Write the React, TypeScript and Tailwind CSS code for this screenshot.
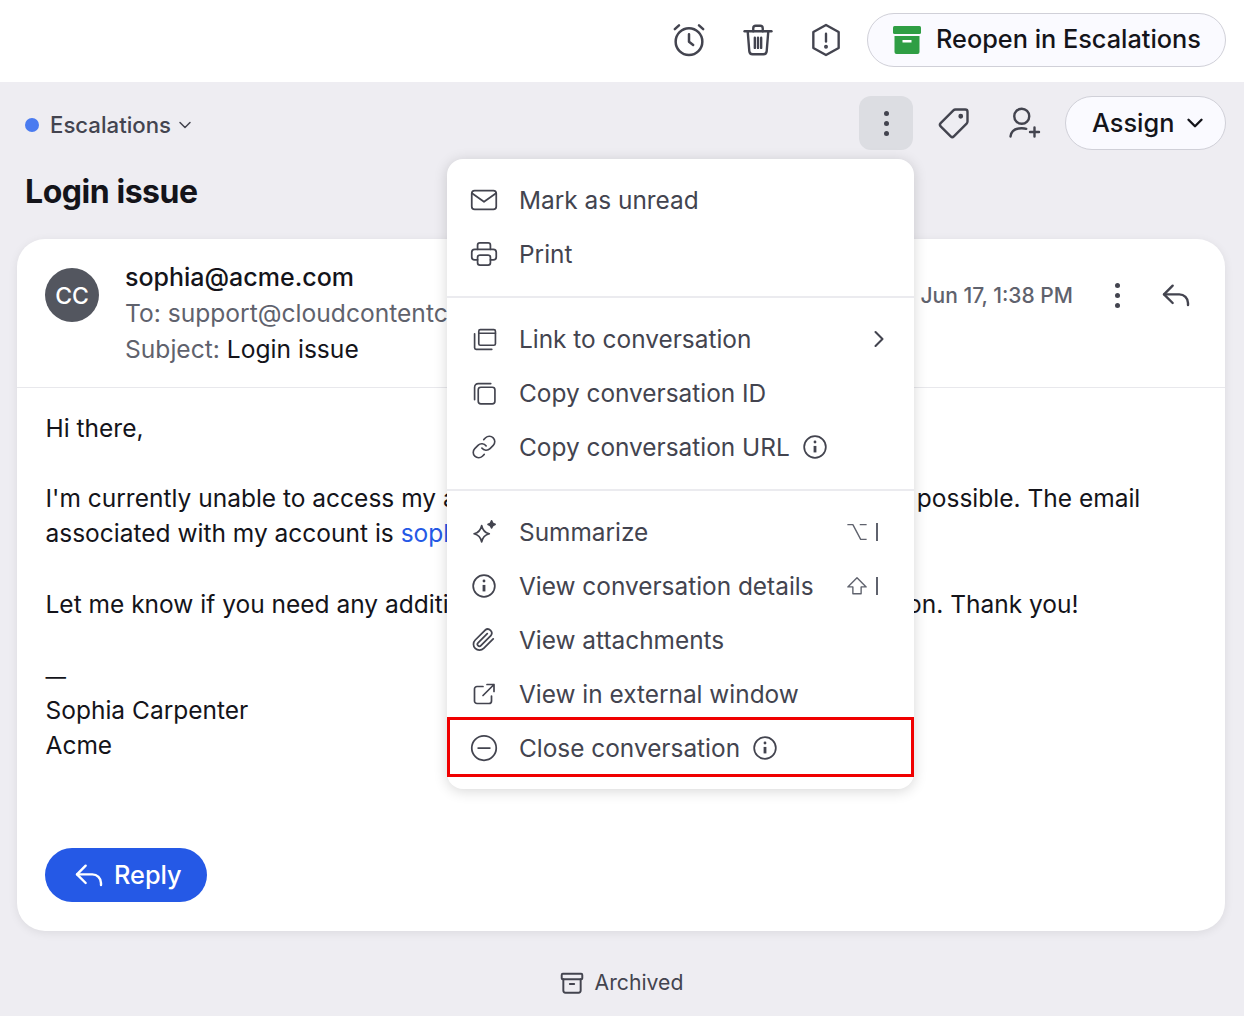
import React from 'react';
import { ChevronDown, ChevronRight } from 'lucide-react';

const Ico = ({ size = 28, sw = 2, className = '', children }: { size?: number; sw?: number; className?: string; children: React.ReactNode }) => (
  <svg width={size} height={size} viewBox="0 0 24 24" fill="none" stroke="currentColor" strokeWidth={sw} strokeLinecap="round" strokeLinejoin="round" className={className}>
    {children}
  </svg>
);

const InfoIcon = ({ size = 26 }: { size?: number }) => (
  <Ico size={size} sw={1.6}>
    <circle cx="12" cy="12" r="10" />
    <path d="M12 11v6" strokeWidth={2.6} strokeLinecap="butt" />
    <circle cx="12" cy="7.4" r="1.3" fill="currentColor" stroke="none" />
  </Ico>
);

const MenuRow = ({ icon, label, right }: { icon: React.ReactNode; label: string; right?: React.ReactNode }) => (
  <div className="flex h-[54px] items-center pl-[22px] pr-[34px] text-[24.4px] text-[#43444f]">
    <span className="flex w-[30px] justify-center">{icon}</span>
    <span className="ml-[20px] flex-1 whitespace-nowrap">{label}</span>
    {right}
  </div>
);

const ReplyArrow = ({ size = 32 }: { size?: number }) => (
  <Ico size={size} sw={1.8}>
    <path d="M9.5 5 3 11.5 9.5 18" />
    <path d="M3 11.5h11.5a6.5 6.5 0 0 1 6.5 6.5v1.5" />
  </Ico>
);

const Dots = ({ className = '' }: { className?: string }) => (
  <span className={`flex flex-col gap-[5px] ${className}`}>
    <span className="h-[5px] w-[5px] rounded-full bg-current" />
    <span className="h-[5px] w-[5px] rounded-full bg-current" />
    <span className="h-[5px] w-[5px] rounded-full bg-current" />
  </span>
);

function Shortcut({ kind }: { kind: 'opt' | 'shift' }) {
  return (
    <span className="mr-[2px] flex items-center gap-[8px] text-[#5f626d]">
      {kind === 'opt' ? (
        <Ico size={22} sw={1.5}>
          <path d="M1.500 4h6l8.500 16h6.500M15 4h7.500" strokeLinecap="butt" />
        </Ico>
      ) : (
        <Ico size={22} sw={1.5}>
          <path d="M12 3 2 13h5.500v7.500h9V13H22z" />
        </Ico>
      )}
      <span className="h-[18px] w-[2px] bg-current" />
    </span>
  );
}

export default function App() {
  return (
    <div className="relative h-[1016px] w-[1244px] overflow-hidden bg-[#eeedf2] font-['Inter',sans-serif] text-[#14141a]">
      <div className="flex h-[82px] items-center justify-end bg-white pb-[2px] pr-[18px] text-[#43444f]">
        <span className="mr-[30px] ml-[4px]">
          <Ico size={40} sw={1.5}>
            <circle cx="12" cy="13" r="8" />
            <path d="M12 8.500V13l2.500 2" />
            <path d="M3.500 5.500 6 3.200M20.500 5.500 18 3.200" />
          </Ico>
        </span>
        <span className="mr-[30px]">
          <Ico size={38} sw={1.5}>
            <path d="M3.500 6.500h17" />
            <path d="M9 6.500V4.600c0-.9.7-1.600 1.600-1.600h2.800c.9 0 1.600.7 1.600 1.600v1.900" />
            <path d="M5.500 6.500 6.500 19c.1 1.200 1 2 2.100 2h6.800c1.100 0 2-.8 2.100-2l1-12.500" />
            <path d="M10 10.500v6.500M12 10.500v6.500M14 10.500v6.500" />
          </Ico>
        </span>
        <span className="mr-[22px]">
          <Ico size={38} sw={1.5}>
            <path d="M12 2.500 20 7v10l-8 4.500L4 17V7z" />
            <path d="M12 8v5" />
            <circle cx="12" cy="16.300" r=".5" fill="currentColor" />
          </Ico>
        </span>
        <button className="flex h-[54px] w-[359px] items-center rounded-full border border-[#d0d0d8] bg-[#fafaff] pl-[24px] text-[25.3px] font-medium text-[#14141a]">
          <svg width="30" height="30" viewBox="0 0 30 30" className="mr-[14px]">
            <rect x="1" y="1" width="28" height="8" rx="1.500" fill="#2f9e44" />
            <path d="M2.500 11h25v16a2 2 0 0 1-2 2h-21a2 2 0 0 1-2-2z" fill="#2f9e44" />
            <rect x="10.500" y="15" width="9" height="2.500" fill="#fff" />
          </svg>
          <span className="-mt-[2px]">Reopen in Escalations</span>
        </button>
      </div>

      <div className="mt-[14px] flex h-[54px] items-center pl-[25px] pr-[18px]">
        <span className="mt-[4px] h-[14px] w-[14px] rounded-full bg-[#4a7bf0]" />
        <span className="ml-[11px] mt-[4px] text-[22.2px] font-medium text-[#43444f]">Escalations</span>
        <ChevronDown size={20} strokeWidth={1.8} className="ml-[4px] mt-[4px] text-[#43444f]" />
        <span className="ml-auto flex h-[54px] w-[54px] items-center justify-center rounded-[12px] bg-[#dcdde2] text-[#43444f]">
          <Dots />
        </span>
        <span className="ml-[23px] text-[#43444f]">
          <Ico size={36} sw={1.6}>
            <path d="M13 3h6.500A1.500 1.500 0 0 1 21 4.500V11a2 2 0 0 1-.6 1.400l-8.500 8.500a1.500 1.500 0 0 1-2.100 0L3.100 14.200a1.500 1.500 0 0 1 0-2.100l8.500-8.500A2 2 0 0 1 13 3z" />
            <circle cx="16.500" cy="7.500" r=".8" fill="currentColor" />
          </Ico>
        </span>
        <span className="ml-[34px] text-[#43444f]">
          <Ico size={36} sw={1.6}>
            <circle cx="10.500" cy="7.500" r="5" />
            <path d="M3 21c.5-3.500 3-5.500 7.500-5.500 1.200 0 2.200.1 3 .4" />
            <path d="M19 15v6M16 18h6" />
          </Ico>
        </span>
        <button className="ml-[23px] flex h-[54px] w-[161px] items-center rounded-full border border-[#d0d0d8] bg-[#fafaff] pl-[26px] text-[25.3px] font-medium">
          Assign
          <ChevronDown size={26} strokeWidth={2.2} className="ml-[8px]" />
        </button>
      </div>

      <h1 className="ml-[25px] mt-[21px] text-[32px] leading-[42px] font-bold tracking-[-0.45px]">Login issue</h1>

      <div className="ml-[17px] mr-[19px] mt-[26px] h-[692px] rounded-[28px] bg-white shadow-[0_2px_10px_rgba(0,0,0,0.08)]">
        <div className="flex h-[149px] border-b border-[#e8e8ec] pl-[28px] pr-[33px] pt-[20px]">
          <span className="mt-[9px] flex h-[54px] w-[54px] items-center justify-center rounded-full bg-[#53565f] pt-[2px] text-[23px] font-medium text-white">CC</span>
          <div className="ml-[26px] flex-1 text-[24.6px] leading-[36px] whitespace-nowrap">
            <div className="text-[25px] font-medium">sophia@acme.com</div>
            <div className="text-[#5f626d]">To: support@cloudcontentco.com</div>
            <div className="text-[#5f626d]">Subject: <span className="text-[#14141a]">Login issue</span></div>
          </div>
          <div className="flex h-[72px] items-center self-start">
            <span className="pt-[2px] text-[21px] font-medium text-[#5f626d]">Jun 17, 1:38 PM</span>
            <Dots className="ml-[42px] text-[#43444f]" />
            <span className="ml-[40px] text-[#43444f]"><ReplyArrow /></span>
          </div>
        </div>

        <div className="pl-[28.5px] pt-[23px] text-[24.5px] leading-[35px] whitespace-nowrap">
          <p>Hi there,</p>
          <p className="mt-[35px]">I'm currently unable to access my account and I would like help as soon as possible. The email</p>
          <p>associated with my account is <span className="text-[#2559e6]">sophia@acme.com</span>.</p>
          <p className="mt-[36px]">Let me know if you need any additional details to swiftly resolve this situation. Thank you!</p>
          <p className="mt-[37px] text-[20.5px]">—</p>
          <p className="-mt-[1px]">Sophia Carpenter</p>
          <p>Acme</p>
        </div>

        <button className="ml-[28px] mt-[85px] flex h-[54px] w-[162px] items-center rounded-full bg-[#2559e6] pl-[28px] text-[25.3px] font-medium text-white">
          <ReplyArrow />
          <span className="ml-[9px]">Reply</span>
        </button>
      </div>

      <div className="mt-[36px] flex items-center justify-center gap-[10px] pr-[2px] text-[21.2px] text-[#43444f]">
        <Ico size={26} sw={1.8}>
          <rect x="2.500" y="3.500" width="19" height="5" rx="1" />
          <path d="M4 8.500V19a2 2 0 0 0 2 2h12a2 2 0 0 0 2-2V8.500" />
          <path d="M10 13h4" />
        </Ico>
        Archived
      </div>

      {/* dropdown */}
      <div className="absolute left-[447px] top-[159px] h-[630px] w-[467px] rounded-[16px] bg-white shadow-[0_2px_14px_rgba(0,0,0,0.16)]">
        <div className="border-b-2 border-[#ebebef] pb-[15px] pt-[14px]">
          <MenuRow label="Mark as unread" icon={
            <Ico size={28} sw={1.5}>
              <rect x="1.500" y="4" width="21" height="16" rx="2.500" />
              <path d="M2 6.500 12 13.500 22 6.500" />
            </Ico>
          } />
          <MenuRow label="Print" icon={
            <Ico size={28} sw={1.5}>
              <path d="M6.500 8V4.500a2 2 0 0 1 2-2h7a2 2 0 0 1 2 2V8" />
              <path d="M6.500 17H4a2.500 2.500 0 0 1-2.500-2.500v-4A2.500 2.500 0 0 1 4 8h16a2.500 2.500 0 0 1 2.500 2.500v4A2.500 2.500 0 0 1 20 17h-2.500" />
              <rect x="6.500" y="13" width="11" height="8.500" rx="2" />
            </Ico>
          } />
        </div>
        <div className="border-b-2 border-[#ebebef] pb-[15px] pt-[14px]">
          <MenuRow label="Link to conversation" right={<ChevronRight size={28} strokeWidth={1.8} className="-mr-[13px]" />} icon={
            <Ico size={25} sw={1.6}>
              <rect x="6.500" y="2.500" width="16" height="15" rx="1.500" />
              <path d="M6.500 6h16" />
              <path d="M2.500 6.500V20a1.500 1.500 0 0 0 1.500 1.500h15" />
            </Ico>
          } />
          <MenuRow label="Copy conversation ID" icon={
            <Ico size={25} sw={1.6}>
              <rect x="6" y="6" width="16" height="16" rx="2.500" />
              <path d="M18 2.500H6A3.500 3.500 0 0 0 2.500 6v12" />
            </Ico>
          } />
          <MenuRow label="Copy conversation URL" right={<span className="absolute left-[355px] flex"><InfoIcon /></span>} icon={
            <Ico size={26} sw={1.5}>
              <path d="M10 13a5 5 0 0 0 7.540.540l3-3a5 5 0 0 0-7.070-7.070l-1.720 1.710" />
              <path d="M14 11a5 5 0 0 0-7.540-.540l-3 3a5 5 0 0 0 7.070 7.070l1.710-1.710" />
            </Ico>
          } />
        </div>
        <div className="pt-[14px]">
          <MenuRow label="Summarize" right={<Shortcut kind="opt" />} icon={
            <Ico size={28} sw={1.5}>
              <path d="M10 6.500c.8 4 2.500 6 6.500 7-4 1-5.700 3-6.500 7-.8-4-2.500-6-6.500-7 4-1 5.700-3 6.500-7z" />
              <path d="M18.500 2.500c.4 1.800 1.100 2.600 3 3-1.900.4-2.600 1.200-3 3-.4-1.800-1.100-2.600-3-3 1.900-.4 2.600-1.200 3-3z" fill="currentColor" />
            </Ico>
          } />
          <MenuRow label="View conversation details" right={<Shortcut kind="shift" />} icon={<InfoIcon size={26} />} />
          <MenuRow label="View attachments" icon={
            <Ico size={26} sw={1.6}>
              <path d="m20.500 11-8.800 8.800a5.500 5.500 0 0 1-7.800-7.800l9.200-9.200a3.700 3.700 0 0 1 5.200 5.200L9.100 17.200a1.800 1.800 0 0 1-2.600-2.600L15 6.200" />
            </Ico>
          } />
          <MenuRow label="View in external window" icon={
            <Ico size={24} sw={1.7}>
              <path d="M11 4.500H5A2.500 2.500 0 0 0 2.500 7v12A2.500 2.500 0 0 0 5 21.500h12a2.500 2.500 0 0 0 2.500-2.500v-5" />
              <path d="M15 2.500h7v7M22 2.500 11 13.500" />
            </Ico>
          } />
          <MenuRow label="Close conversation" right={<span className="absolute left-[305px] flex"><InfoIcon /></span>} icon={
            <Ico size={28} sw={1.5}>
              <circle cx="12" cy="12" r="10.500" />
              <path d="M7 12h10" />
            </Ico>
          } />
        </div>
        <div className="absolute left-0 top-[558px] h-[60px] w-[467px] border-[3px] border-[#f00000]" />
      </div>
    </div>
  );
}
